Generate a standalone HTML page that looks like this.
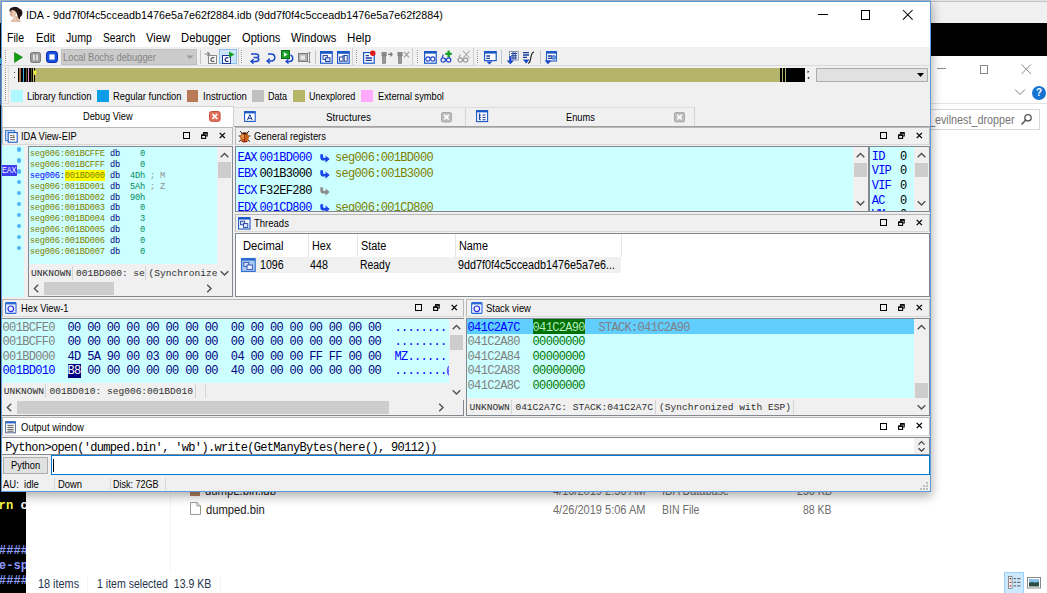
<!DOCTYPE html>
<html><head><meta charset="utf-8"><title>IDA</title>
<style>
html,body{margin:0;padding:0;}
body{width:1047px;height:593px;overflow:hidden;position:relative;background:#fff;font-family:"Liberation Sans",sans-serif;font-size:11px;color:#000;}
div,span,svg{position:absolute;box-sizing:border-box;}
.t{white-space:pre;line-height:1;font-family:"Liberation Sans",sans-serif;}
.m{font-family:"Liberation Mono",monospace;white-space:pre;}
.m i{font-style:normal;}
</style></head><body>
<!-- background: explorer + terminal -->
<div style="left:930px;top:0px;width:117px;height:23px;background:#f0f0f0;"></div>
<div style="left:930px;top:0px;width:117px;height:1px;background:#e4e4e4;"></div>
<div style="left:930px;top:1px;width:117px;height:1px;background:#c4c4c4;"></div>
<div style="left:930px;top:23px;width:117px;height:33px;background:#000;"></div>
<div style="left:937px;top:68px;width:9px;height:1px;background:#8a8a8a;"></div>
<div style="left:979.5px;top:65px;width:8.6px;height:8.6px;border:1px solid #8a8a8a;"></div>
<svg style="left:1021px;top:64px" width="11" height="11" viewBox="0 0 11 11"><path d="M0.5 0.5 L10 10 M10 0.5 L0.5 10" stroke="#8a8a8a" stroke-width="1" fill="none"/></svg>
<svg style="left:1014px;top:88px" width="12" height="8" viewBox="0 0 12 8"><path d="M1 1.5 L6 6.5 L11 1.5" stroke="#7a7a7a" stroke-width="1" fill="none"/></svg>
<div style="left:1032px;top:86px;width:14px;height:14px;border-radius:7px;background:#1673d2;"></div>
<span class="t" style="left:1036.00px;top:87.40px;font-size:11px;color:#fff;font-weight:bold;transform:scaleX(0.9000);transform-origin:0 0;">?</span>
<div style="left:930px;top:103px;width:117px;height:1px;background:#e5e5e5;"></div>
<div style="left:925px;top:109px;width:115px;height:21px;background:#fff;border:1px solid #d9d9d9;"></div>
<span class="t" style="left:929.20px;top:113.90px;font-size:12px;color:#767676;transform:scaleX(0.8963);transform-origin:0 0;">_evilnest_dropper</span>
<svg style="left:1020px;top:113px" width="13" height="13" viewBox="0 0 13 13"><circle cx="8" cy="4.8" r="3.2" stroke="#555" stroke-width="1.3" fill="none"/><path d="M5.6 7.2 L1.5 11.5" stroke="#555" stroke-width="1.6"/></svg>
<div style="left:170px;top:492px;width:1px;height:80px;background:#f4f4f4;"></div>
<span class="t" style="left:205.10px;top:485.20px;font-size:12px;color:#222;transform:scaleX(0.9406);transform-origin:0 0;">dumpL.bin.idb</span>
<div style="left:190px;top:486px;width:10px;height:10px;background:#b08060;"></div>
<span class="t" style="left:552.60px;top:485.20px;font-size:12px;color:#6d6d6d;transform:scaleX(0.9172);transform-origin:0 0;">4/16/2019 2:56 AM</span>
<span class="t" style="left:662.10px;top:485.20px;font-size:12px;color:#6d6d6d;transform:scaleX(0.9035);transform-origin:0 0;">IDA Database</span>
<span class="t" style="left:796.60px;top:485.20px;font-size:12px;color:#6d6d6d;transform:scaleX(0.8866);transform-origin:0 0;">256 KB</span>
<svg style="left:190px;top:502px" width="11" height="13" viewBox="0 0 11 13"><path d="M0.5 0.5 H7 L10.5 4 V12.5 H0.5 Z" fill="#fff" stroke="#9a9a9a" stroke-width="1"/><path d="M7 0.5 V4 H10.5" fill="none" stroke="#9a9a9a" stroke-width="1"/></svg>
<span class="t" style="left:206.00px;top:503.90px;font-size:12px;color:#1a1a1a;transform:scaleX(0.9361);transform-origin:0 0;">dumped.bin</span>
<span class="t" style="left:552.60px;top:503.90px;font-size:12px;color:#6d6d6d;transform:scaleX(0.9172);transform-origin:0 0;">4/26/2019 5:06 AM</span>
<span class="t" style="left:662.10px;top:503.90px;font-size:12px;color:#6d6d6d;transform:scaleX(0.8764);transform-origin:0 0;">BIN File</span>
<span class="t" style="left:803.40px;top:503.90px;font-size:12px;color:#6d6d6d;transform:scaleX(0.8688);transform-origin:0 0;">88 KB</span>
<span class="t" style="left:37.60px;top:578.20px;font-size:12px;color:#26344e;transform:scaleX(0.9063);transform-origin:0 0;">18 items</span>
<span class="t" style="left:97.10px;top:578.20px;font-size:12px;color:#26344e;transform:scaleX(0.8796);transform-origin:0 0;">1 item selected  13.9 KB</span>
<div style="left:87px;top:577px;width:1px;height:14px;background:#f4f4f4;"></div>
<div style="left:220px;top:577px;width:1px;height:14px;background:#f4f4f4;"></div>
<div style="left:1004px;top:572px;width:20px;height:22px;background:#cce8ff;border:1px solid #99d1ff;"></div>
<svg style="left:1008px;top:576px" width="13" height="13" viewBox="0 0 13 13"><rect x="0.5" y="0.5" width="3.5" height="12" fill="#fff" stroke="#777" stroke-width="0.8"/><rect x="1.6" y="2" width="1.4" height="1.4" fill="#333"/><rect x="1.6" y="5.6" width="1.4" height="1.4" fill="#c33"/><rect x="1.6" y="9.2" width="1.4" height="1.4" fill="#c33"/><path d="M5.5 2.7 H8 M9 2.7 H12.5 M5.5 6.3 H8 M9 6.3 H12.5 M5.5 9.9 H8 M9 9.9 H12.5" stroke="#555" stroke-width="1"/></svg>
<svg style="left:1027px;top:577px" width="14" height="12" viewBox="0 0 14 12"><rect x="0.5" y="0.5" width="13" height="10.5" fill="#fff" stroke="#8a8a8a" stroke-width="1"/><rect x="2" y="2" width="10" height="4" fill="#8cc4ec"/><rect x="2" y="5.6" width="10" height="3.9" fill="#2c4c44"/><path d="M2 6 L5 4.4 L8 5.8 L12 4.6 V6 Z" fill="#3a6a8a"/></svg>
<div style="left:0px;top:0px;width:1.5px;height:23px;background:#b2bcc6;"></div>
<div style="left:0px;top:0px;width:931px;height:1px;background:#b4c0cc;"></div>
<div style="left:0px;top:23px;width:1.5px;height:570px;background:#0c0c0c;"></div>
<div style="left:0px;top:58px;width:1.3px;height:6px;background:#30c8d8;"></div>
<div style="left:0px;top:65px;width:1.3px;height:40px;background:#5a86b8;"></div>
<div style="left:0;top:492px;width:25.6px;height:101px;background:#000;overflow:hidden;">
<span class="m" style="left:-1.4px;top:7.2px;font-size:12.2px;line-height:15.35px;font-weight:bold;color:#f6f644;">rn <i style="color:#fff">c</i></span>
<span class="m" style="left:-1.2px;top:51.5px;font-size:12.2px;line-height:15.35px;font-weight:bold;color:#8c9cff;">####
e-sp
####</span>
</div>
<!-- IDA window -->
<div style="left:1px;top:1px;width:930px;height:491px;background:#f0f0f0;border:1px solid #5f9ad8;box-shadow:0 3px 10px 1px rgba(0,0,0,0.32);"></div>
<div style="left:2px;top:2px;width:928px;height:45px;background:#fff;"></div>
<svg style="left:8px;top:6px" width="15" height="17" viewBox="0 0 15 17"><path d="M2.6 15.6 Q5.4 13.6 5.8 10.4 L9.6 9.6 Q10.2 13.4 12.8 15.2 L12.6 16 L2.4 16 Z" fill="#dcbca6"/><ellipse cx="5" cy="6.6" rx="3.3" ry="4.4" fill="#e6c6ae"/><path d="M1.4 5.2 Q1.2 1.2 5.8 0.9 Q9.6 0.6 11.6 2.8 Q14.8 3.8 14.4 7.6 Q14 10.8 11.8 11.2 Q12.8 12.8 11.6 13.4 Q9.8 11.8 9.4 9.2 Q8.8 6.2 6.6 4.6 Q4.2 3.4 2.4 5 Z" fill="#231513"/><path d="M2 6 Q3 5.4 4.2 5.9" stroke="#3a2018" stroke-width="0.6" fill="none"/><ellipse cx="3.2" cy="8.8" rx="0.9" ry="0.55" fill="#c8584c"/><path d="M6.6 11.4 Q7.6 12.6 7.2 14.6" stroke="#f4e6da" stroke-width="0.9" fill="none"/></svg>
<span class="t" style="left:26.30px;top:9.25px;font-size:11.7px;color:#000;transform:scaleX(0.9228);transform-origin:0 0;">IDA - 9dd7f0f4c5cceadb1476e5a7e62f2884.idb (9dd7f0f4c5cceadb1476e5a7e62f2884)</span>
<div style="left:818px;top:14px;width:10px;height:1px;background:#000;"></div>
<div style="left:860.5px;top:10px;width:9.5px;height:9.5px;border:1px solid #000;"></div>
<svg style="left:902px;top:9px" width="12" height="12" viewBox="0 0 12 12"><path d="M1 1 L10.6 10.6 M10.6 1 L1 10.6" stroke="#000" stroke-width="1.05" fill="none"/></svg>
<span class="t" style="left:6.90px;top:32.30px;font-size:12px;color:#000;transform:scaleX(0.8792);transform-origin:0 0;">File</span>
<span class="t" style="left:35.60px;top:32.30px;font-size:12px;color:#000;transform:scaleX(0.9285);transform-origin:0 0;">Edit</span>
<span class="t" style="left:65.60px;top:32.30px;font-size:12px;color:#000;transform:scaleX(0.8827);transform-origin:0 0;">Jump</span>
<span class="t" style="left:103.20px;top:32.30px;font-size:12px;color:#000;transform:scaleX(0.8496);transform-origin:0 0;">Search</span>
<span class="t" style="left:146.30px;top:32.30px;font-size:12px;color:#000;transform:scaleX(0.9383);transform-origin:0 0;">View</span>
<span class="t" style="left:181.40px;top:32.30px;font-size:12px;color:#000;transform:scaleX(0.9393);transform-origin:0 0;">Debugger</span>
<span class="t" style="left:242.10px;top:32.30px;font-size:12px;color:#000;transform:scaleX(0.9286);transform-origin:0 0;">Options</span>
<span class="t" style="left:291.10px;top:32.30px;font-size:12px;color:#000;transform:scaleX(0.9326);transform-origin:0 0;">Windows</span>
<span class="t" style="left:346.60px;top:32.30px;font-size:12px;color:#000;transform:scaleX(0.9684);transform-origin:0 0;">Help</span>
<!-- toolbar -->
<div style="left:2px;top:65px;width:928px;height:1px;background:#dadada;"></div>
<div style="left:5px;top:50px;width:1px;height:14px;background:repeating-linear-gradient(to bottom,#9a9a9a 0 1px,transparent 1px 2px);"></div>
<div style="left:6px;top:51px;width:1px;height:14px;background:repeating-linear-gradient(to bottom,#fff 0 1px,transparent 1px 2px);"></div>
<svg style="left:14px;top:52px" width="9" height="11" viewBox="0 0 9 11"><path d="M0.4 0.4 L8.6 5.3 L0.4 10.4 Z" fill="#12a012" stroke="#0c7a0c" stroke-width="0.6"/></svg>
<svg style="left:30px;top:52px" width="11" height="11" viewBox="0 0 11 11"><rect x="0.5" y="0.5" width="10" height="10" rx="1.8" fill="#9a9a9a" stroke="#7a7a7a"/><rect x="3.2" y="2.6" width="1.5" height="5.8" fill="#f4f4f4"/><rect x="6.3" y="2.6" width="1.5" height="5.8" fill="#f4f4f4"/></svg>
<svg style="left:46px;top:51px" width="12" height="12" viewBox="0 0 12 12"><rect x="0.5" y="0.5" width="11" height="11" rx="2.6" fill="#1a4fe0" stroke="#0a2aa8"/><rect x="3.4" y="3.4" width="5.2" height="5.2" fill="#fff"/></svg>
<div style="left:61px;top:49px;width:136px;height:16px;background:#cbcbcb;border:1px solid #c0c0c0;"></div>
<span class="t" style="left:63.40px;top:51.90px;font-size:11px;color:#848484;transform:scaleX(0.8487);transform-origin:0 0;">Local Bochs debugger</span>
<svg style="left:186px;top:55px" width="8" height="5" viewBox="0 0 8 5"><path d="M0.5 0.5 L4 4 L7.5 0.5 Z" fill="#9a9a9a"/></svg>
<div style="left:200px;top:50px;width:1px;height:14px;background:#c4c4c4;"></div>
<svg style="left:204px;top:51px" width="13" height="13" viewBox="0 0 13 13"><rect x="4.5" y="4.5" width="8" height="8" fill="#f6f6f6" stroke="#8a8a8a"/><path d="M10.3 7 Q8.5 6 7.3 7.3 Q6.3 8.8 7.5 10 Q8.8 11 10.3 10" stroke="#555" stroke-width="1.1" fill="none"/><path d="M0.5 3 H5 M3.4 1 L5.6 3 L3.4 5" stroke="#8a8a8a" stroke-width="1.2" fill="none"/></svg>
<div style="left:219px;top:49px;width:18px;height:15px;background:#cce4f7;border:1px solid #8cc0ea;"></div>
<svg style="left:222px;top:51px" width="13" height="13" viewBox="0 0 13 13"><rect x="0.5" y="4.5" width="8" height="8" fill="#fff" stroke="#1c3c9c"/><path d="M6.5 7 Q4.7 6 3.5 7.3 Q2.5 8.8 3.7 10 Q5 11 6.5 10" stroke="#1c2c7c" stroke-width="1.2" fill="none"/><path d="M7 0.5 L12.5 3.6 L7 6.8 Z" fill="#14a024"/></svg>
<div style="left:238px;top:48px;width:1px;height:17px;background:#d0d0d0;"></div>
<div style="left:241px;top:50px;width:1px;height:14px;background:repeating-linear-gradient(to bottom,#9a9a9a 0 1px,transparent 1px 2px);"></div>
<div style="left:242px;top:51px;width:1px;height:14px;background:repeating-linear-gradient(to bottom,#fff 0 1px,transparent 1px 2px);"></div>
<svg style="left:250px;top:51px" width="10" height="13" viewBox="0 0 10 13"><path d="M1 3 H6 Q8.6 3 8.6 5 Q8.6 6.6 6 6.6 H3.5 M6 6.6 Q8.8 6.6 8.8 8.6 Q8.8 10.4 6 10.4 H2" stroke="#1a48c8" stroke-width="1.5" fill="none"/><path d="M3.6 8.2 L1 10.4 L3.6 12.6" stroke="#1a48c8" stroke-width="1.4" fill="none"/></svg>
<svg style="left:266px;top:51px" width="10" height="13" viewBox="0 0 10 13"><path d="M2 3 H5 Q8.8 3 8.8 6.6 Q8.8 10 5 10 H2" stroke="#1a48c8" stroke-width="1.5" fill="none"/><path d="M3.8 7.6 L1 10 L3.8 12.4" stroke="#1a48c8" stroke-width="1.4" fill="none"/></svg>
<svg style="left:281px;top:50px" width="13" height="14" viewBox="0 0 13 14"><rect x="0.5" y="0.5" width="8" height="8" fill="#18a028" stroke="#0c6c18"/><path d="M2.8 2.3 L6.6 4.5 L2.8 6.7 Z" fill="#e8ffe8"/><path d="M9.5 5 Q12.4 6 11.6 9.4 Q10.6 12 6 11.4" stroke="#1a48c8" stroke-width="1.5" fill="none"/><path d="M7.4 9.2 L5 11.4 L7.6 13.4" stroke="#1a48c8" stroke-width="1.3" fill="none"/></svg>
<svg style="left:298px;top:52px" width="13" height="11" viewBox="0 0 13 11"><rect x="0.5" y="1.5" width="9" height="8" fill="#b0b0b0" stroke="#7c7c7c"/><rect x="2.5" y="3.5" width="4.5" height="4" fill="#e8e8e8"/><path d="M11.5 0.5 V10.5 M10 0.8 H12.6 M10 10.2 H12.6" stroke="#8a8a8a" stroke-width="1"/></svg>
<div style="left:315px;top:50px;width:1px;height:14px;background:#c4c4c4;"></div>
<svg style="left:320px;top:51px" width="13" height="13" viewBox="0 0 13 13"><rect x="0.6" y="0.6" width="11.6" height="11.6" fill="#fff" stroke="#1a58c8" stroke-width="1.2"/><rect x="0.6" y="0.6" width="11.6" height="2.2" fill="#1a58c8"/><rect x="3" y="4.6" width="4.4" height="3.8" fill="none" stroke="#1a3c9c"/><rect x="5.6" y="6.8" width="4.4" height="3.6" fill="#dde8ff" stroke="#1a3c9c"/></svg>
<svg style="left:337px;top:51px" width="13" height="13" viewBox="0 0 13 13"><rect x="0.6" y="0.6" width="11.6" height="11.6" fill="#fff" stroke="#1a58c8" stroke-width="1.2"/><rect x="0.6" y="0.6" width="11.6" height="2.2" fill="#1a58c8"/><rect x="2.6" y="6" width="3.4" height="4.2" fill="none" stroke="#1a3c9c"/><rect x="7.2" y="4.4" width="3" height="5.8" fill="none" stroke="#1a3c9c"/><path d="M5 5 H7.4" stroke="#1a3c9c"/></svg>
<div style="left:352px;top:48px;width:1px;height:17px;background:#d0d0d0;"></div>
<div style="left:356px;top:50px;width:1px;height:14px;background:repeating-linear-gradient(to bottom,#9a9a9a 0 1px,transparent 1px 2px);"></div>
<div style="left:357px;top:51px;width:1px;height:14px;background:repeating-linear-gradient(to bottom,#fff 0 1px,transparent 1px 2px);"></div>
<svg style="left:363px;top:50px" width="13" height="14" viewBox="0 0 13 14"><rect x="0.6" y="2.6" width="10.6" height="10.6" fill="#fff" stroke="#1a58c8" stroke-width="1.2"/><path d="M2.6 5.6 H6 M2.6 8 H9 M2.6 10.4 H9" stroke="#1a3c9c" stroke-width="1.3"/><circle cx="9.8" cy="3.2" r="2.7" fill="#e01818"/></svg>
<svg style="left:380px;top:51px" width="13" height="13" viewBox="0 0 13 13"><rect x="1.5" y="1" width="5.2" height="4" fill="#8a8a8a"/><rect x="2.6" y="5" width="3" height="7.4" fill="#9a9a9a" stroke="#6e6e6e" stroke-width="0.6"/><path d="M8 3.4 H12 M10.4 1.4 L12.2 3.4 L10.4 5.4" stroke="#7a7a7a" stroke-width="1.2" fill="none"/></svg>
<svg style="left:396px;top:51px" width="14" height="13" viewBox="0 0 14 13"><rect x="1.5" y="1" width="5.2" height="4" fill="#8a8a8a"/><rect x="2.6" y="5" width="3" height="7.4" fill="#9a9a9a" stroke="#6e6e6e" stroke-width="0.6"/><path d="M8 0.8 L13 6.4 M13 0.8 L8 6.4" stroke="#9a9a9a" stroke-width="1.1" fill="none"/></svg>
<div style="left:412px;top:48px;width:1px;height:17px;background:#d0d0d0;"></div>
<div style="left:417px;top:50px;width:1px;height:14px;background:repeating-linear-gradient(to bottom,#9a9a9a 0 1px,transparent 1px 2px);"></div>
<div style="left:418px;top:51px;width:1px;height:14px;background:repeating-linear-gradient(to bottom,#fff 0 1px,transparent 1px 2px);"></div>
<svg style="left:424px;top:51px" width="13" height="13" viewBox="0 0 13 13"><rect x="0.6" y="0.6" width="11.6" height="11.6" fill="#fff" stroke="#1a58c8" stroke-width="1.2"/><rect x="0.6" y="0.6" width="11.6" height="2" fill="#1a58c8"/><circle cx="4" cy="8" r="2.1" fill="none" stroke="#1a48c8" stroke-width="1.1"/><circle cx="8.8" cy="8" r="2.1" fill="none" stroke="#1a48c8" stroke-width="1.1"/></svg>
<svg style="left:440px;top:50px" width="13" height="14" viewBox="0 0 13 14"><circle cx="3.2" cy="10" r="2.2" fill="none" stroke="#1a48c8" stroke-width="1.2"/><circle cx="8.6" cy="10" r="2.2" fill="none" stroke="#1a48c8" stroke-width="1.2"/><path d="M2 7.6 L3.4 4.6 M9.6 7.6 L8.6 6" stroke="#1a48c8" stroke-width="1.1"/><path d="M8.6 0.6 V7 M5.4 3.8 H11.8" stroke="#12a022" stroke-width="2.2"/></svg>
<svg style="left:457px;top:50px" width="14" height="14" viewBox="0 0 14 14"><circle cx="3.2" cy="10" r="2.2" fill="none" stroke="#9a9a9a" stroke-width="1.2"/><circle cx="8.6" cy="10" r="2.2" fill="none" stroke="#9a9a9a" stroke-width="1.2"/><path d="M2 7.6 L3.4 4.6" stroke="#9a9a9a" stroke-width="1.1"/><path d="M6 0.8 L12.6 8 M12.6 0.8 L6 8" stroke="#a8a8a8" stroke-width="1.1"/></svg>
<div style="left:473px;top:48px;width:1px;height:17px;background:#d0d0d0;"></div>
<div style="left:477px;top:50px;width:1px;height:14px;background:repeating-linear-gradient(to bottom,#9a9a9a 0 1px,transparent 1px 2px);"></div>
<div style="left:478px;top:51px;width:1px;height:14px;background:repeating-linear-gradient(to bottom,#fff 0 1px,transparent 1px 2px);"></div>
<svg style="left:484px;top:51px" width="13" height="14" viewBox="0 0 13 14"><rect x="0.6" y="0.6" width="11.6" height="9" fill="#fff" stroke="#1a58c8" stroke-width="1.2"/><rect x="0.6" y="0.6" width="11.6" height="2" fill="#1a58c8"/><path d="M2.4 5 H6 M2.4 7.4 H6" stroke="#1a3c9c" stroke-width="1.3"/><path d="M2.4 10.6 H8.4 L5.4 13.4 Z" fill="#1a48c8"/></svg>
<div style="left:501px;top:50px;width:1px;height:14px;background:#c4c4c4;"></div>
<svg style="left:506px;top:51px" width="13" height="14" viewBox="0 0 13 14"><rect x="3.6" y="0.6" width="8.6" height="8.4" fill="#fff" stroke="#6a7a9a" stroke-width="0.8"/><path d="M5 2.6 H11 M5 4.8 H11 M5 7 H11 M7 1 V8.6 M9.2 1 V8.6" stroke="#1a3c9c" stroke-width="1"/><path d="M0.6 9.4 H8 L4.3 13.2 Z" fill="#1a48c8"/><path d="M4.3 5 V10" stroke="#1a48c8" stroke-width="2"/></svg>
<svg style="left:522px;top:51px" width="13" height="14" viewBox="0 0 13 14"><path d="M1 1.6 H7 M1 4 H7 M1 6.4 H5" stroke="#1a3c9c" stroke-width="1.4"/><path d="M0.8 8.6 H7.6 L4.2 12.6 Z" fill="#1a48c8"/><path d="M12 0.8 Q9.4 2 8.8 7 Q8.4 11 6.4 12.6" stroke="#222" stroke-width="1.2" fill="none"/></svg>
<div style="left:540px;top:50px;width:1px;height:14px;background:#c4c4c4;"></div>
<svg style="left:544px;top:51px" width="13" height="14" viewBox="0 0 13 14"><rect x="2.6" y="0.6" width="9.8" height="9.4" fill="#fff" stroke="#1a58c8" stroke-width="1.1"/><rect x="2.6" y="0.6" width="9.8" height="2" fill="#1a58c8"/><path d="M4 5 H8 M4 7.4 H8" stroke="#1a3c9c" stroke-width="1.3"/><circle cx="9.6" cy="6.4" r="2" fill="#6aa0e8" stroke="#1a3c9c" stroke-width="0.6"/><path d="M0.6 9.6 H7.4 L4 13.2 Z" fill="#1a48c8"/></svg>
<!-- nav band -->
<div style="left:5px;top:68px;width:1px;height:33px;background:repeating-linear-gradient(to bottom,#9a9a9a 0 1px,transparent 1px 2px);"></div>
<div style="left:6px;top:69px;width:1px;height:33px;background:repeating-linear-gradient(to bottom,#fff 0 1px,transparent 1px 2px);"></div>
<div style="left:8px;top:66px;width:1px;height:37px;background:#dedede;"></div>
<div style="left:2px;top:102.5px;width:7px;height:1px;background:#dedede;"></div>
<div style="left:14px;top:72px;width:1px;height:1px;background:#444;"></div>
<div style="left:14px;top:77px;width:1px;height:1px;background:#444;"></div>
<div style="left:18px;top:68px;width:762px;height:14px;background:#b4b46a;"></div>
<div style="left:18px;top:68px;width:17.4px;height:14px;background:#000;"></div>
<div style="left:19.3px;top:68px;width:1.4px;height:14px;background:#a8704c;"></div>
<div style="left:23px;top:68px;width:1.4px;height:14px;background:#40a8e0;"></div>
<div style="left:26.4px;top:68px;width:0.7px;height:14px;background:#5a5a30;"></div>
<div style="left:28.3px;top:68px;width:0.9px;height:14px;background:#e890d8;"></div>
<div style="left:30.7px;top:68px;width:0.7px;height:14px;background:#5a5a30;"></div>
<div style="left:33px;top:68px;width:0.8px;height:14px;background:#c8c870;"></div>
<svg style="left:33px;top:70px" width="4" height="5" viewBox="0 0 4 5"><path d="M2 0 L4 2.4 H2.8 V5 H1.2 V2.4 H0 Z" fill="#ffff30"/></svg>
<div style="left:780px;top:68px;width:25px;height:14px;background:#000;"></div>
<div style="left:782.2px;top:68px;width:0.9px;height:14px;background:#b4b46a;"></div>
<div style="left:785.1px;top:68px;width:0.9px;height:14px;background:#b4b46a;"></div>
<svg style="left:806px;top:70px" width="5" height="10" viewBox="0 0 5 10"><path d="M1.5 0.6 L3.4 1.8 L1.5 3" fill="#222"/><path d="M3.2 6.6 L1.4 8 L3.2 9.2" fill="#222"/></svg>
<div style="left:816px;top:68px;width:111.6px;height:14px;background:#e1e1e1;border:1px solid #adadad;"></div>
<svg style="left:917px;top:73px" width="7" height="4" viewBox="0 0 7 4"><path d="M0 0 H7 L3.5 4 Z" fill="#000"/></svg>
<!-- legend -->
<div style="left:11px;top:90px;width:11.5px;height:12px;background:#b0f8ff;"></div>
<span class="t" style="left:27.10px;top:90.75px;font-size:10.5px;color:#000;transform:scaleX(0.8972);transform-origin:0 0;">Library function</span>
<div style="left:97px;top:90px;width:11.5px;height:12px;background:#0a9ee6;"></div>
<span class="t" style="left:112.80px;top:90.75px;font-size:10.5px;color:#000;transform:scaleX(0.8972);transform-origin:0 0;">Regular function</span>
<div style="left:186.6px;top:90px;width:11.5px;height:12px;background:#b97a57;"></div>
<span class="t" style="left:202.60px;top:90.75px;font-size:10.5px;color:#000;transform:scaleX(0.9063);transform-origin:0 0;">Instruction</span>
<div style="left:252px;top:90px;width:11.5px;height:12px;background:#c0c0c0;"></div>
<span class="t" style="left:268.40px;top:90.75px;font-size:10.5px;color:#000;transform:scaleX(0.8612);transform-origin:0 0;">Data</span>
<div style="left:293px;top:90px;width:11.5px;height:12px;background:#b5b567;"></div>
<span class="t" style="left:309.30px;top:90.75px;font-size:10.5px;color:#000;transform:scaleX(0.8604);transform-origin:0 0;">Unexplored</span>
<div style="left:361px;top:90px;width:11.5px;height:12px;background:#ffaaff;"></div>
<span class="t" style="left:377.60px;top:90.75px;font-size:10.5px;color:#000;transform:scaleX(0.8823);transform-origin:0 0;">External symbol</span>
<!-- tabs -->
<div style="left:2px;top:126px;width:928px;height:1px;background:#a0a0a0;"></div>
<div style="left:2px;top:106px;width:232px;height:21px;background:#fff;border:1px solid #d0d0d0;border-bottom:none;"></div>
<span class="t" style="left:83.40px;top:111.45px;font-size:10.5px;color:#000;transform:scaleX(0.8791);transform-origin:0 0;">Debug View</span>
<svg style="left:209px;top:111px" width="12" height="11" viewBox="0 0 12 11"><rect x="0.5" y="0.5" width="10.6" height="9.8" rx="2" fill="#e2705c" stroke="#c4523e"/><path d="M3.4 3 L8.2 7.8 M8.2 3 L3.4 7.8" stroke="#fff" stroke-width="1.7"/></svg>
<div style="left:234px;top:107px;width:232px;height:19px;background:#f0f0f0;border-top:1px solid #dcdcdc;border-right:1px solid #d4d4d4;"></div>
<svg style="left:244px;top:111px" width="12" height="11" viewBox="0 0 12 11"><rect x="0.6" y="0.6" width="10.6" height="9.8" fill="#fff" stroke="#1a58c8" stroke-width="1.1"/><rect x="0.6" y="0.6" width="10.6" height="1.8" fill="#1a58c8"/><path d="M3.4 9.2 L5.8 3.6 L8.2 9.2 M4.2 7.4 H7.4" stroke="#1a3c9c" stroke-width="1" fill="none"/></svg>
<span class="t" style="left:325.60px;top:112.05px;font-size:10.5px;color:#000;transform:scaleX(0.9384);transform-origin:0 0;">Structures</span>
<svg style="left:441px;top:112px" width="11" height="11" viewBox="0 0 11 11"><rect x="0.5" y="0.5" width="10" height="9.4" rx="1.4" fill="#bdbdbd" stroke="#a8a8a8"/><path d="M3.2 2.9 L7.8 7.5 M7.8 2.9 L3.2 7.5" stroke="#fff" stroke-width="1.6"/></svg>
<div style="left:466px;top:107px;width:229px;height:19px;background:#f0f0f0;border-top:1px solid #dcdcdc;border-right:1px solid #d4d4d4;"></div>
<svg style="left:476px;top:110px" width="13" height="13" viewBox="0 0 13 13"><rect x="0.6" y="0.6" width="11" height="11" fill="#fff" stroke="#1a58c8" stroke-width="1.1"/><rect x="0.6" y="0.6" width="11" height="1.8" fill="#1a58c8"/><path d="M3.4 3.4 V10 M3.4 5 H5 M3.4 7.4 H5 M3.4 9.8 H5 M6.4 5 H9.6 M6.4 7.4 H9.6 M6.4 9.8 H9.6" stroke="#1a3c9c" stroke-width="1" fill="none"/></svg>
<span class="t" style="left:565.60px;top:112.05px;font-size:10.5px;color:#000;transform:scaleX(0.8844);transform-origin:0 0;">Enums</span>
<svg style="left:673.5px;top:112px" width="11" height="11" viewBox="0 0 11 11"><rect x="0.5" y="0.5" width="10" height="9.4" rx="1.4" fill="#bdbdbd" stroke="#a8a8a8"/><path d="M3.2 2.9 L7.8 7.5 M7.8 2.9 L3.2 7.5" stroke="#fff" stroke-width="1.6"/></svg>
<!-- panels -->
<div style="left:2px;top:127px;width:231px;height:18px;background:#f0f0f0;border:1px solid #b8b8b8;border-bottom-color:#d8d8d8;"></div>
<span class="t" style="left:20.90px;top:131.05px;font-size:10.5px;color:#000;transform:scaleX(0.8865);transform-origin:0 0;">IDA View-EIP</span>
<div style="left:183px;top:132.0px;width:7px;height:7px;border:1px solid #000;border-top-width:1.6px;"></div>
<svg style="left:201px;top:132.0px" width="7" height="7" viewBox="0 0 7 7"><path d="M2.5 2.5 V0.8 H6.2 V4 H4.6" stroke="#000" stroke-width="1.1" fill="none"/><path d="M2.3 0.9 H6.4" stroke="#000" stroke-width="1.6"/><rect x="0.6" y="3.2" width="4" height="3.2" fill="none" stroke="#000" stroke-width="1.1"/><path d="M0.4 3.1 H4.8" stroke="#000" stroke-width="1.5"/></svg>
<svg style="left:219px;top:131.8px" width="7" height="7" viewBox="0 0 7 7"><path d="M0.7 0.9 L5.9 6.1 M5.9 0.9 L0.7 6.1" stroke="#000" stroke-width="1.3" fill="none"/></svg>
<svg style="left:5px;top:130.4px" width="13" height="13" viewBox="0 0 13 13"><rect x="0.6" y="0.6" width="9" height="10" fill="#cfe3fb" stroke="#3a78d0" stroke-width="1"/><rect x="3.2" y="2.6" width="9" height="9.6" fill="#fff" stroke="#1a58c8" stroke-width="1.1"/><path d="M5 5.4 H7.6 M5 7.4 H10 M5 9.6 H10 M8.8 4.6 V7" stroke="#555" stroke-width="0.9"/></svg>
<div style="left:2px;top:146px;width:22px;height:151px;background:#ccffff;"></div>
<div style="left:28px;top:146px;width:205px;height:151px;background:#f0f0f0;border:1px solid #828790;"></div>
<div style="left:29px;top:147px;width:188px;height:117px;background:#ccffff;"></div>
<div style="left:17px;top:147.4px;width:4.4px;height:4.4px;border-radius:2.2px;background:#50b4f4;"></div>
<div style="left:17px;top:158.3px;width:4.4px;height:4.4px;border-radius:2.2px;background:#50b4f4;"></div>
<div style="left:17px;top:169.2px;width:4.4px;height:4.4px;border-radius:2.2px;background:#50b4f4;"></div>
<div style="left:17px;top:180.1px;width:4.4px;height:4.4px;border-radius:2.2px;background:#50b4f4;"></div>
<div style="left:17px;top:191.0px;width:4.4px;height:4.4px;border-radius:2.2px;background:#50b4f4;"></div>
<div style="left:17px;top:201.9px;width:4.4px;height:4.4px;border-radius:2.2px;background:#50b4f4;"></div>
<div style="left:17px;top:212.8px;width:4.4px;height:4.4px;border-radius:2.2px;background:#50b4f4;"></div>
<div style="left:17px;top:223.7px;width:4.4px;height:4.4px;border-radius:2.2px;background:#50b4f4;"></div>
<div style="left:17px;top:234.6px;width:4.4px;height:4.4px;border-radius:2.2px;background:#50b4f4;"></div>
<div style="left:17px;top:245.5px;width:4.4px;height:4.4px;border-radius:2.2px;background:#50b4f4;"></div>
<div style="left:1.6px;top:165px;width:15.6px;height:11px;background:#3c3cf0;"></div>
<span class="t" style="left:2.20px;top:165.80px;font-size:9px;color:#fff;transform:scaleX(0.7940);transform-origin:0 0;">EAX</span>
<span class="m" style="left:29.70px;top:149.90px;font-size:8.7px;line-height:8.7px;letter-spacing:-0.201px;"><i style="color:#808000;">seg006:</i><i style="color:#808000;">001BCFFE</i><i style="color:#000080;"> db</i><i style="color:#008a60;">    0</i></span>
<span class="m" style="left:29.70px;top:160.80px;font-size:8.7px;line-height:8.7px;letter-spacing:-0.201px;"><i style="color:#808000;">seg006:</i><i style="color:#808000;">001BCFFF</i><i style="color:#000080;"> db</i><i style="color:#008a60;">    0</i></span>
<span class="m" style="left:29.70px;top:171.70px;font-size:8.7px;line-height:8.7px;letter-spacing:-0.201px;"><i style="color:#0000ff;">seg006:</i><i style="color:#808000;background:#ffff00;padding-top:1.2px;">001BD000</i><i style="color:#000080;"> db</i><i style="color:#008a60;">  4Dh</i><i style="color:#909090;"> ; M</i></span>
<span class="m" style="left:29.70px;top:182.60px;font-size:8.7px;line-height:8.7px;letter-spacing:-0.201px;"><i style="color:#808000;">seg006:</i><i style="color:#808000;">001BD001</i><i style="color:#000080;"> db</i><i style="color:#008a60;">  5Ah</i><i style="color:#909090;"> ; Z</i></span>
<span class="m" style="left:29.70px;top:193.50px;font-size:8.7px;line-height:8.7px;letter-spacing:-0.201px;"><i style="color:#808000;">seg006:</i><i style="color:#808000;">001BD002</i><i style="color:#000080;"> db</i><i style="color:#008a60;">  90h</i></span>
<span class="m" style="left:29.70px;top:204.40px;font-size:8.7px;line-height:8.7px;letter-spacing:-0.201px;"><i style="color:#808000;">seg006:</i><i style="color:#808000;">001BD003</i><i style="color:#000080;"> db</i><i style="color:#008a60;">    0</i></span>
<span class="m" style="left:29.70px;top:215.30px;font-size:8.7px;line-height:8.7px;letter-spacing:-0.201px;"><i style="color:#808000;">seg006:</i><i style="color:#808000;">001BD004</i><i style="color:#000080;"> db</i><i style="color:#008a60;">    3</i></span>
<span class="m" style="left:29.70px;top:226.20px;font-size:8.7px;line-height:8.7px;letter-spacing:-0.201px;"><i style="color:#808000;">seg006:</i><i style="color:#808000;">001BD005</i><i style="color:#000080;"> db</i><i style="color:#008a60;">    0</i></span>
<span class="m" style="left:29.70px;top:237.10px;font-size:8.7px;line-height:8.7px;letter-spacing:-0.201px;"><i style="color:#808000;">seg006:</i><i style="color:#808000;">001BD006</i><i style="color:#000080;"> db</i><i style="color:#008a60;">    0</i></span>
<span class="m" style="left:29.70px;top:248.00px;font-size:8.7px;line-height:8.7px;letter-spacing:-0.201px;"><i style="color:#808000;">seg006:</i><i style="color:#808000;">001BD007</i><i style="color:#000080;"> db</i><i style="color:#008a60;">    0</i></span>
<span class="m" style="left:31.00px;top:268.82px;font-size:9.57px;line-height:9.57px;letter-spacing:-0.003px;color:#2e2e2e;">UNKNOWN</span>
<span class="m" style="left:76.00px;top:268.82px;font-size:9.57px;line-height:9.57px;letter-spacing:-0.003px;color:#2e2e2e;width:69px;overflow:hidden;">001BD000: se</span>
<span class="m" style="left:148.60px;top:268.82px;font-size:9.57px;line-height:9.57px;letter-spacing:-0.003px;color:#2e2e2e;width:68px;overflow:hidden;">(Synchronize</span>
<div style="left:72px;top:266px;width:1px;height:14px;background:#d4d4d4;"></div>
<div style="left:145px;top:266px;width:1px;height:14px;background:#d4d4d4;"></div>
<div style="left:217px;top:147px;width:15px;height:134px;background:#f0f0f0;"></div>
<svg style="left:220.0px;top:152px" width="9" height="7" viewBox="0 0 9 7"><path d="M0.7 5.2 L4.5 1.4 L8.3 5.2" stroke="#505050" stroke-width="1.4" fill="none"/></svg>
<svg style="left:220.0px;top:269.5px" width="9" height="7" viewBox="0 0 9 7"><path d="M0.7 1.2 L4.5 5 L8.3 1.2" stroke="#505050" stroke-width="1.4" fill="none"/></svg>
<div style="left:218px;top:162px;width:13px;height:16px;background:#cdcdcd;"></div>
<div style="left:29px;top:281px;width:188px;height:14.5px;background:#f0f0f0;"></div>
<svg style="left:33px;top:283.8px" width="7" height="9" viewBox="0 0 7 9"><path d="M5.2 0.7 L1.4 4.5 L5.2 8.3" stroke="#505050" stroke-width="1.4" fill="none"/></svg>
<svg style="left:205.5px;top:283.8px" width="7" height="9" viewBox="0 0 7 9"><path d="M1.2 0.7 L5 4.5 L1.2 8.3" stroke="#505050" stroke-width="1.4" fill="none"/></svg>
<div style="left:44px;top:282px;width:70px;height:13px;background:#cdcdcd;"></div>
<div style="left:217px;top:281px;width:15px;height:15px;background:#f0f0f0;"></div>
<div style="left:235px;top:127px;width:695px;height:18px;background:#f0f0f0;border:1px solid #b8b8b8;border-bottom-color:#d8d8d8;"></div>
<span class="t" style="left:253.90px;top:131.05px;font-size:10.5px;color:#000;transform:scaleX(0.8929);transform-origin:0 0;">General registers</span>
<div style="left:880px;top:132.0px;width:7px;height:7px;border:1px solid #000;border-top-width:1.6px;"></div>
<svg style="left:898px;top:132.0px" width="7" height="7" viewBox="0 0 7 7"><path d="M2.5 2.5 V0.8 H6.2 V4 H4.6" stroke="#000" stroke-width="1.1" fill="none"/><path d="M2.3 0.9 H6.4" stroke="#000" stroke-width="1.6"/><rect x="0.6" y="3.2" width="4" height="3.2" fill="none" stroke="#000" stroke-width="1.1"/><path d="M0.4 3.1 H4.8" stroke="#000" stroke-width="1.5"/></svg>
<svg style="left:916px;top:131.8px" width="7" height="7" viewBox="0 0 7 7"><path d="M0.7 0.9 L5.9 6.1 M5.9 0.9 L0.7 6.1" stroke="#000" stroke-width="1.3" fill="none"/></svg>
<svg style="left:238px;top:130.4px" width="13" height="13" viewBox="0 0 13 13"><path d="M2 1 L4.4 3.6 M11 1 L8.6 3.6 M0.6 6 H3 M12.4 6 H10 M1 11.6 L3.4 9.6 M12 11.6 L9.6 9.6" stroke="#222" stroke-width="1"/><ellipse cx="6.5" cy="7.2" rx="4.3" ry="4.9" fill="#c8621c"/><ellipse cx="5.2" cy="6.4" rx="1.8" ry="2.6" fill="#e8964a"/><path d="M3 3.8 Q6.5 1.2 10 3.8 Q6.5 5.4 3 3.8 Z" fill="#3a1c0c"/><path d="M6.5 4.6 V12" stroke="#8a2a08" stroke-width="0.9"/><path d="M3.6 11 Q6.5 13 9.4 11" stroke="#a01c10" stroke-width="1.2" fill="none"/></svg>
<div style="left:235px;top:146px;width:634px;height:66px;background:#f0f0f0;border:1px solid #828790;"></div>
<div style="left:236px;top:147px;width:617px;height:64px;background:#ccffff;"></div>
<div style="left:236px;top:147px;width:617px;height:64px;overflow:hidden;">
<span class="m" style="left:1.60px;top:5.00px;font-size:12px;line-height:12px;letter-spacing:-0.901px;color:#0000ff;">EAX</span>
<span class="m" style="left:23.60px;top:5.00px;font-size:12px;line-height:12px;letter-spacing:-0.671px;color:#0000ff;">001BD000</span>
<svg style="left:83.6px;top:6.5px" width="10" height="9" viewBox="0 0 10 9"><path d="M0.3 0.3 H3.1 V2.8 Q3.1 4 4.5 4 H5.5 V1.6 L9.7 5.1 L5.5 8.8 V6.6 H3.6 Q0.3 6.6 0.3 3.2 Z" fill="#1848e8"/></svg>
<span class="m" style="left:99.00px;top:5.00px;font-size:12px;line-height:12px;letter-spacing:-0.671px;color:#808000;">seg006:001BD000</span>
<span class="m" style="left:1.60px;top:21.00px;font-size:12px;line-height:12px;letter-spacing:-0.901px;color:#0000ff;">EBX</span>
<span class="m" style="left:23.60px;top:21.00px;font-size:12px;line-height:12px;letter-spacing:-0.671px;color:#000;">001B3000</span>
<svg style="left:83.6px;top:22.5px" width="10" height="9" viewBox="0 0 10 9"><path d="M0.3 0.3 H3.1 V2.8 Q3.1 4 4.5 4 H5.5 V1.6 L9.7 5.1 L5.5 8.8 V6.6 H3.6 Q0.3 6.6 0.3 3.2 Z" fill="#1848e8"/></svg>
<span class="m" style="left:99.00px;top:21.00px;font-size:12px;line-height:12px;letter-spacing:-0.671px;color:#808000;">seg006:001B3000</span>
<span class="m" style="left:1.60px;top:38.00px;font-size:12px;line-height:12px;letter-spacing:-0.901px;color:#0000ff;">ECX</span>
<span class="m" style="left:23.60px;top:38.00px;font-size:12px;line-height:12px;letter-spacing:-0.671px;color:#000;">F32EF280</span>
<svg style="left:83.6px;top:39.5px" width="10" height="9" viewBox="0 0 10 9"><path d="M0.3 0.3 H3.1 V2.8 Q3.1 4 4.5 4 H5.5 V1.6 L9.7 5.1 L5.5 8.8 V6.6 H3.6 Q0.3 6.6 0.3 3.2 Z" fill="#8c8c8c"/></svg>
<span class="m" style="left:1.60px;top:55.00px;font-size:12px;line-height:12px;letter-spacing:-0.901px;color:#0000ff;">EDX</span>
<span class="m" style="left:23.60px;top:55.00px;font-size:12px;line-height:12px;letter-spacing:-0.671px;color:#0000ff;">001CD800</span>
<svg style="left:83.6px;top:56.5px" width="10" height="9" viewBox="0 0 10 9"><path d="M0.3 0.3 H3.1 V2.8 Q3.1 4 4.5 4 H5.5 V1.6 L9.7 5.1 L5.5 8.8 V6.6 H3.6 Q0.3 6.6 0.3 3.2 Z" fill="#1848e8"/></svg>
<span class="m" style="left:99.00px;top:55.00px;font-size:12px;line-height:12px;letter-spacing:-0.671px;color:#808000;">seg006:001CD800</span>
</div>
<div style="left:853px;top:147px;width:15px;height:64px;background:#f0f0f0;"></div>
<svg style="left:856.0px;top:152px" width="9" height="7" viewBox="0 0 9 7"><path d="M0.7 5.2 L4.5 1.4 L8.3 5.2" stroke="#505050" stroke-width="1.4" fill="none"/></svg>
<svg style="left:856.0px;top:199.5px" width="9" height="7" viewBox="0 0 9 7"><path d="M0.7 1.2 L4.5 5 L8.3 1.2" stroke="#505050" stroke-width="1.4" fill="none"/></svg>
<div style="left:854px;top:162.5px;width:13px;height:14.5px;background:#cdcdcd;"></div>
<div style="left:869px;top:146px;width:61px;height:66px;background:#f0f0f0;border:1px solid #828790;"></div>
<div style="left:870px;top:147px;width:44px;height:64px;overflow:hidden;background:#ccffff;">
<span class="m" style="left:1.80px;top:4.00px;font-size:12px;line-height:12px;letter-spacing:-0.801px;color:#0000ff;">ID</span>
<span class="m" style="left:30.00px;top:4.00px;font-size:12px;line-height:12px;letter-spacing:-0.671px;color:#000;">0</span>
<span class="m" style="left:1.80px;top:18.00px;font-size:12px;line-height:12px;letter-spacing:-0.801px;color:#0000ff;">VIP</span>
<span class="m" style="left:30.00px;top:18.00px;font-size:12px;line-height:12px;letter-spacing:-0.671px;color:#000;">0</span>
<span class="m" style="left:1.80px;top:33.00px;font-size:12px;line-height:12px;letter-spacing:-0.801px;color:#0000ff;">VIF</span>
<span class="m" style="left:30.00px;top:33.00px;font-size:12px;line-height:12px;letter-spacing:-0.671px;color:#000;">0</span>
<span class="m" style="left:1.80px;top:48.00px;font-size:12px;line-height:12px;letter-spacing:-0.801px;color:#0000ff;">AC</span>
<span class="m" style="left:30.00px;top:48.00px;font-size:12px;line-height:12px;letter-spacing:-0.671px;color:#000;">0</span>
<span class="m" style="left:1.80px;top:62.00px;font-size:12px;line-height:12px;letter-spacing:-0.801px;color:#0000ff;">VM</span>
<span class="m" style="left:30.00px;top:62.00px;font-size:12px;line-height:12px;letter-spacing:-0.671px;color:#000;">0</span>
</div>
<div style="left:914px;top:147px;width:15px;height:64px;background:#f0f0f0;"></div>
<svg style="left:917.0px;top:152px" width="9" height="7" viewBox="0 0 9 7"><path d="M0.7 5.2 L4.5 1.4 L8.3 5.2" stroke="#505050" stroke-width="1.4" fill="none"/></svg>
<svg style="left:917.0px;top:199.5px" width="9" height="7" viewBox="0 0 9 7"><path d="M0.7 1.2 L4.5 5 L8.3 1.2" stroke="#505050" stroke-width="1.4" fill="none"/></svg>
<div style="left:915px;top:162.5px;width:13px;height:14.5px;background:#cdcdcd;"></div>
<div style="left:235px;top:214px;width:695px;height:18px;background:#f0f0f0;border:1px solid #b8b8b8;border-bottom-color:#d8d8d8;"></div>
<span class="t" style="left:253.90px;top:218.05px;font-size:10.5px;color:#000;transform:scaleX(0.9061);transform-origin:0 0;">Threads</span>
<div style="left:880px;top:219.0px;width:7px;height:7px;border:1px solid #000;border-top-width:1.6px;"></div>
<svg style="left:898px;top:219.0px" width="7" height="7" viewBox="0 0 7 7"><path d="M2.5 2.5 V0.8 H6.2 V4 H4.6" stroke="#000" stroke-width="1.1" fill="none"/><path d="M2.3 0.9 H6.4" stroke="#000" stroke-width="1.6"/><rect x="0.6" y="3.2" width="4" height="3.2" fill="none" stroke="#000" stroke-width="1.1"/><path d="M0.4 3.1 H4.8" stroke="#000" stroke-width="1.5"/></svg>
<svg style="left:916px;top:218.8px" width="7" height="7" viewBox="0 0 7 7"><path d="M0.7 0.9 L5.9 6.1 M5.9 0.9 L0.7 6.1" stroke="#000" stroke-width="1.3" fill="none"/></svg>
<svg style="left:238px;top:217.4px" width="13" height="13" viewBox="0 0 13 13"><rect x="0.6" y="0.6" width="11.4" height="11.4" fill="#fff" stroke="#1a58c8" stroke-width="1.1"/><rect x="0.6" y="0.6" width="11.4" height="2" fill="#1a58c8"/><rect x="2.6" y="4.2" width="4.2" height="3.6" fill="#dce8fc" stroke="#1a3c9c" stroke-width="0.9"/><rect x="5.4" y="6.6" width="4.4" height="3.8" fill="#dce8fc" stroke="#1a3c9c" stroke-width="0.9"/></svg>
<div style="left:235px;top:233px;width:695px;height:64px;background:#fff;border:1px solid #828790;"></div>
<div style="left:239.5px;top:256.5px;width:381.5px;height:16.5px;background:#f0f0f0;"></div>
<div style="left:308px;top:234px;width:1px;height:22.5px;background:#e5e5e5;"></div>
<div style="left:357px;top:234px;width:1px;height:22.5px;background:#e5e5e5;"></div>
<div style="left:455px;top:234px;width:1px;height:22.5px;background:#e5e5e5;"></div>
<div style="left:621px;top:234px;width:1px;height:22.5px;background:#e5e5e5;"></div>
<span class="t" style="left:242.60px;top:239.70px;font-size:12px;color:#000;transform:scaleX(0.9322);transform-origin:0 0;">Decimal</span>
<span class="t" style="left:312.10px;top:239.70px;font-size:12px;color:#000;transform:scaleX(0.8951);transform-origin:0 0;">Hex</span>
<span class="t" style="left:360.80px;top:239.70px;font-size:12px;color:#000;transform:scaleX(0.9066);transform-origin:0 0;">State</span>
<span class="t" style="left:459.10px;top:239.70px;font-size:12px;color:#000;transform:scaleX(0.9029);transform-origin:0 0;">Name</span>
<svg style="left:241px;top:257.5px" width="15" height="14" viewBox="0 0 15 14"><rect x="0.6" y="0.6" width="13.6" height="12.8" fill="#a9cbf2" stroke="#2a6ad0" stroke-width="1.1"/><rect x="0.6" y="0.6" width="13.6" height="2" fill="#2a6ad0"/><rect x="2.8" y="4.4" width="5" height="4" fill="#dbe9fb" stroke="#2a4cac" stroke-width="0.9"/><rect x="6" y="7" width="5.4" height="4.4" fill="#eef4ff" stroke="#2a4cac" stroke-width="0.9"/></svg>
<span class="t" style="left:260.10px;top:258.70px;font-size:12px;color:#000;transform:scaleX(0.8841);transform-origin:0 0;">1096</span>
<span class="t" style="left:310.10px;top:258.70px;font-size:12px;color:#000;transform:scaleX(0.8941);transform-origin:0 0;">448</span>
<span class="t" style="left:359.60px;top:258.70px;font-size:12px;color:#000;transform:scaleX(0.8678);transform-origin:0 0;">Ready</span>
<span class="t" style="left:457.60px;top:258.70px;font-size:12px;color:#000;transform:scaleX(0.8976);transform-origin:0 0;">9dd7f0f4c5cceadb1476e5a7e6...</span>
<!-- hex view -->
<div style="left:2px;top:299px;width:462px;height:18px;background:#f0f0f0;border:1px solid #b8b8b8;border-bottom-color:#d8d8d8;"></div>
<span class="t" style="left:20.90px;top:303.05px;font-size:10.5px;color:#000;transform:scaleX(0.8861);transform-origin:0 0;">Hex View-1</span>
<div style="left:415px;top:304.0px;width:7px;height:7px;border:1px solid #000;border-top-width:1.6px;"></div>
<svg style="left:433px;top:304.0px" width="7" height="7" viewBox="0 0 7 7"><path d="M2.5 2.5 V0.8 H6.2 V4 H4.6" stroke="#000" stroke-width="1.1" fill="none"/><path d="M2.3 0.9 H6.4" stroke="#000" stroke-width="1.6"/><rect x="0.6" y="3.2" width="4" height="3.2" fill="none" stroke="#000" stroke-width="1.1"/><path d="M0.4 3.1 H4.8" stroke="#000" stroke-width="1.5"/></svg>
<svg style="left:451px;top:303.8px" width="7" height="7" viewBox="0 0 7 7"><path d="M0.7 0.9 L5.9 6.1 M5.9 0.9 L0.7 6.1" stroke="#000" stroke-width="1.3" fill="none"/></svg>
<svg style="left:5px;top:302.4px" width="13" height="13" viewBox="0 0 13 13"><rect x="0.6" y="0.6" width="10.4" height="10.8" rx="1" fill="#eef4ff" stroke="#2a68d8" stroke-width="1.1"/><rect x="0.6" y="0.6" width="10.4" height="1.8" fill="#2a68d8"/><ellipse cx="5.8" cy="6.8" rx="2.8" ry="2.8" fill="none" stroke="#2a2ae0" stroke-width="1.2"/></svg>
<div style="left:2px;top:318px;width:462px;height:98px;background:#f0f0f0;border:1px solid #828790;border-left:none;"></div>
<div style="left:2px;top:319px;width:447px;height:63.5px;background:#ccffff;"></div>
<div style="left:2px;top:319px;width:447px;height:63.5px;overflow:hidden;">
<span class="m" style="left:0.60px;top:3.00px;font-size:12px;line-height:12px;letter-spacing:-0.671px;color:#808080;">001BCFE0</span>
<span class="m" style="left:65.60px;top:3.00px;font-size:12px;line-height:12px;letter-spacing:-0.671px;color:#000080;">00 00 00 00 00 00 00 00  00 00 00 00 00 00 00 00</span>
<span class="m" style="left:392.40px;top:3.00px;font-size:12px;line-height:12px;letter-spacing:-0.671px;color:#0000ff;">........</span>
<span class="m" style="left:0.60px;top:17.00px;font-size:12px;line-height:12px;letter-spacing:-0.671px;color:#808080;">001BCFF0</span>
<span class="m" style="left:65.60px;top:17.00px;font-size:12px;line-height:12px;letter-spacing:-0.671px;color:#000080;">00 00 00 00 00 00 00 00  00 00 00 00 00 00 00 00</span>
<span class="m" style="left:392.40px;top:17.00px;font-size:12px;line-height:12px;letter-spacing:-0.671px;color:#0000ff;">........</span>
<span class="m" style="left:0.60px;top:32.00px;font-size:12px;line-height:12px;letter-spacing:-0.671px;color:#808080;">001BD000</span>
<span class="m" style="left:65.60px;top:32.00px;font-size:12px;line-height:12px;letter-spacing:-0.671px;color:#000080;">4D 5A 90 00 03 00 00 00  04 00 00 00 FF FF 00 00</span>
<span class="m" style="left:392.40px;top:32.00px;font-size:12px;line-height:12px;letter-spacing:-0.671px;color:#0000ff;">MZ......</span>
<span class="m" style="left:0.60px;top:46.00px;font-size:12px;line-height:12px;letter-spacing:-0.671px;color:#0000ff;">001BD010</span>
<span class="m" style="left:65.60px;top:46.00px;font-size:12px;line-height:12px;letter-spacing:-0.671px;"><i style="color:#fff;background:#000080;">B8</i><i style="color:#000080;"> 00 00 00 00 00 00 00  40 00 00 00 00 00 00 00</i></span>
<span class="m" style="left:392.40px;top:46.00px;font-size:12px;line-height:12px;letter-spacing:-0.671px;color:#0000ff;">........@</span>
</div>
<span class="m" style="left:3.80px;top:386.82px;font-size:9.57px;line-height:9.57px;letter-spacing:-0.003px;color:#2e2e2e;">UNKNOWN</span>
<span class="m" style="left:49.60px;top:386.82px;font-size:9.57px;line-height:9.57px;letter-spacing:-0.003px;color:#2e2e2e;">001BD010: seg006:001BD010</span>
<div style="left:45px;top:384px;width:1px;height:14px;background:#d4d4d4;"></div>
<div style="left:195px;top:384px;width:1px;height:14px;background:#d4d4d4;"></div>
<div style="left:205px;top:384px;width:1px;height:14px;background:#d4d4d4;"></div>
<div style="left:449px;top:319px;width:14.5px;height:81px;background:#f0f0f0;"></div>
<svg style="left:451.75px;top:324px" width="9" height="7" viewBox="0 0 9 7"><path d="M0.7 5.2 L4.5 1.4 L8.3 5.2" stroke="#505050" stroke-width="1.4" fill="none"/></svg>
<svg style="left:451.75px;top:388.5px" width="9" height="7" viewBox="0 0 9 7"><path d="M0.7 1.2 L4.5 5 L8.3 1.2" stroke="#505050" stroke-width="1.4" fill="none"/></svg>
<div style="left:450px;top:335px;width:12.5px;height:15px;background:#cdcdcd;"></div>
<div style="left:2px;top:400px;width:447px;height:14.5px;background:#f0f0f0;"></div>
<svg style="left:6px;top:402.5px" width="7" height="9" viewBox="0 0 7 9"><path d="M5.2 0.7 L1.4 4.5 L5.2 8.3" stroke="#505050" stroke-width="1.4" fill="none"/></svg>
<svg style="left:438px;top:402.5px" width="7" height="9" viewBox="0 0 7 9"><path d="M1.2 0.7 L5 4.5 L1.2 8.3" stroke="#505050" stroke-width="1.4" fill="none"/></svg>
<div style="left:17px;top:400.5px;width:372px;height:13.5px;background:#cdcdcd;"></div>
<!-- stack view -->
<div style="left:466px;top:299px;width:464px;height:18px;background:#f0f0f0;border:1px solid #b8b8b8;border-bottom-color:#d8d8d8;"></div>
<span class="t" style="left:485.75px;top:303.05px;font-size:10.5px;color:#000;transform:scaleX(0.8947);transform-origin:0 0;">Stack view</span>
<div style="left:880px;top:304.0px;width:7px;height:7px;border:1px solid #000;border-top-width:1.6px;"></div>
<svg style="left:898px;top:304.0px" width="7" height="7" viewBox="0 0 7 7"><path d="M2.5 2.5 V0.8 H6.2 V4 H4.6" stroke="#000" stroke-width="1.1" fill="none"/><path d="M2.3 0.9 H6.4" stroke="#000" stroke-width="1.6"/><rect x="0.6" y="3.2" width="4" height="3.2" fill="none" stroke="#000" stroke-width="1.1"/><path d="M0.4 3.1 H4.8" stroke="#000" stroke-width="1.5"/></svg>
<svg style="left:916px;top:303.8px" width="7" height="7" viewBox="0 0 7 7"><path d="M0.7 0.9 L5.9 6.1 M5.9 0.9 L0.7 6.1" stroke="#000" stroke-width="1.3" fill="none"/></svg>
<svg style="left:470.7px;top:302.4px" width="13" height="13" viewBox="0 0 13 13"><rect x="0.6" y="0.6" width="10.4" height="10.8" rx="1" fill="#eef4ff" stroke="#2a68d8" stroke-width="1.1"/><rect x="0.6" y="0.6" width="10.4" height="1.8" fill="#2a68d8"/><ellipse cx="5.8" cy="6.8" rx="2.8" ry="2.8" fill="none" stroke="#2a2ae0" stroke-width="1.2"/></svg>
<div style="left:466px;top:318px;width:464px;height:98px;background:#f0f0f0;border:1px solid #828790;"></div>
<div style="left:467px;top:319px;width:447px;height:79px;background:#ccffff;"></div>
<div style="left:467px;top:319px;width:447px;height:14.6px;background:#60ceff;"></div>
<span class="m" style="left:467.60px;top:322.00px;font-size:12px;line-height:12px;letter-spacing:-0.671px;color:#0000ff;">041C2A7C</span>
<div style="left:532.8px;top:319px;width:52.6px;height:14.6px;background:#007000;"></div>
<span class="m" style="left:532.60px;top:322.00px;font-size:12px;line-height:12px;letter-spacing:-0.671px;color:#b4ecc0;">041C2A90</span>
<span class="m" style="left:598.40px;top:322.00px;font-size:12px;line-height:12px;letter-spacing:-0.671px;color:#808080;">STACK:041C2A90</span>
<span class="m" style="left:467.60px;top:336.00px;font-size:12px;line-height:12px;letter-spacing:-0.671px;color:#808080;">041C2A80</span>
<span class="m" style="left:532.60px;top:336.00px;font-size:12px;line-height:12px;letter-spacing:-0.671px;color:#007800;">00000000</span>
<span class="m" style="left:467.60px;top:351.00px;font-size:12px;line-height:12px;letter-spacing:-0.671px;color:#808080;">041C2A84</span>
<span class="m" style="left:532.60px;top:351.00px;font-size:12px;line-height:12px;letter-spacing:-0.671px;color:#007800;">00000000</span>
<span class="m" style="left:467.60px;top:365.00px;font-size:12px;line-height:12px;letter-spacing:-0.671px;color:#808080;">041C2A88</span>
<span class="m" style="left:532.60px;top:365.00px;font-size:12px;line-height:12px;letter-spacing:-0.671px;color:#007800;">00000000</span>
<span class="m" style="left:467.60px;top:380.00px;font-size:12px;line-height:12px;letter-spacing:-0.671px;color:#808080;">041C2A8C</span>
<span class="m" style="left:532.60px;top:380.00px;font-size:12px;line-height:12px;letter-spacing:-0.671px;color:#007800;">00000000</span>
<span class="m" style="left:469.50px;top:402.62px;font-size:9.57px;line-height:9.57px;letter-spacing:-0.003px;color:#2e2e2e;">UNKNOWN</span>
<span class="m" style="left:515.40px;top:402.62px;font-size:9.57px;line-height:9.57px;letter-spacing:-0.003px;color:#2e2e2e;">041C2A7C: STACK:041C2A7C</span>
<span class="m" style="left:659.00px;top:402.62px;font-size:9.57px;line-height:9.57px;letter-spacing:-0.003px;color:#2e2e2e;">(Synchronized with ESP)</span>
<div style="left:511px;top:400px;width:1px;height:14px;background:#d4d4d4;"></div>
<div style="left:655px;top:400px;width:1px;height:14px;background:#d4d4d4;"></div>
<div style="left:793px;top:400px;width:1px;height:14px;background:#d4d4d4;"></div>
<div style="left:914px;top:319px;width:15px;height:96px;background:#f0f0f0;"></div>
<svg style="left:917.0px;top:324px" width="9" height="7" viewBox="0 0 9 7"><path d="M0.7 5.2 L4.5 1.4 L8.3 5.2" stroke="#505050" stroke-width="1.4" fill="none"/></svg>
<svg style="left:917.0px;top:403.5px" width="9" height="7" viewBox="0 0 9 7"><path d="M0.7 1.2 L4.5 5 L8.3 1.2" stroke="#505050" stroke-width="1.4" fill="none"/></svg>
<div style="left:915px;top:383px;width:13px;height:15px;background:#cdcdcd;"></div>
<!-- output -->
<div style="left:2px;top:417px;width:928px;height:19px;background:#fff;border:1px solid #b8b8b8;border-bottom-color:#d8d8d8;"></div>
<span class="t" style="left:20.90px;top:421.55px;font-size:10.5px;color:#000;transform:scaleX(0.9057);transform-origin:0 0;">Output window</span>
<div style="left:880px;top:422.5px;width:7px;height:7px;border:1px solid #000;border-top-width:1.6px;"></div>
<svg style="left:898px;top:422.5px" width="7" height="7" viewBox="0 0 7 7"><path d="M2.5 2.5 V0.8 H6.2 V4 H4.6" stroke="#000" stroke-width="1.1" fill="none"/><path d="M2.3 0.9 H6.4" stroke="#000" stroke-width="1.6"/><rect x="0.6" y="3.2" width="4" height="3.2" fill="none" stroke="#000" stroke-width="1.1"/><path d="M0.4 3.1 H4.8" stroke="#000" stroke-width="1.5"/></svg>
<svg style="left:916px;top:422.3px" width="7" height="7" viewBox="0 0 7 7"><path d="M0.7 0.9 L5.9 6.1 M5.9 0.9 L0.7 6.1" stroke="#000" stroke-width="1.3" fill="none"/></svg>
<svg style="left:5px;top:420.9px" width="13" height="13" viewBox="0 0 13 13"><rect x="0.6" y="0.6" width="9.8" height="11.2" fill="#fff" stroke="#5a6a8a" stroke-width="1"/><rect x="0.6" y="0.6" width="9.8" height="1.8" fill="#2a68d8"/><path d="M2.4 4.4 H8.6 M2.4 6.4 H8.6 M2.4 8.4 H8.6 M2.4 10.2 H8.6" stroke="#444" stroke-width="0.9"/></svg>
<div style="left:2px;top:437px;width:928px;height:18px;background:#fff;border:1px solid #828790;border-left:none;"></div>
<span class="m" style="left:5.20px;top:442.00px;font-size:12px;line-height:12px;letter-spacing:-0.661px;color:#000;">Python&gt;open('dumped.bin', 'wb').write(GetManyBytes(here(), 90112))</span>
<div style="left:914px;top:438px;width:15px;height:16px;background:#f0f0f0;"></div>
<svg style="left:917px;top:440px" width="9" height="13" viewBox="0 0 9 13"><path d="M1.5 4.6 L4.5 1.6 L7.5 4.6 M1.5 8.2 L4.5 11.2 L7.5 8.2" stroke="#404040" stroke-width="1.3" fill="none"/></svg>
<div style="left:3px;top:456.5px;width:44.5px;height:17px;background:#e1e1e1;border:1px solid #adadad;"></div>
<span class="t" style="left:10.90px;top:459.65px;font-size:10.5px;color:#000;transform:scaleX(0.8902);transform-origin:0 0;">Python</span>
<div style="left:51px;top:455px;width:878.5px;height:20px;background:#fff;border:1px solid #0078d7;"></div>
<div style="left:53px;top:458.5px;width:1px;height:13px;background:#000;"></div>
<span class="t" style="left:2.60px;top:479.05px;font-size:10.5px;color:#000;transform:scaleX(0.9047);transform-origin:0 0;">AU:  idle</span>
<span class="t" style="left:57.60px;top:479.05px;font-size:10.5px;color:#000;transform:scaleX(0.8978);transform-origin:0 0;">Down</span>
<span class="t" style="left:112.60px;top:479.05px;font-size:10.5px;color:#000;transform:scaleX(0.8550);transform-origin:0 0;">Disk: 72GB</span>
<div style="left:54px;top:478px;width:1px;height:12px;background:#d7d7d7;"></div>
<div style="left:110px;top:478px;width:1px;height:12px;background:#d7d7d7;"></div>
<div style="left:165px;top:478px;width:1px;height:12px;background:#d7d7d7;"></div>
<svg style="left:917px;top:479px" width="12" height="12" viewBox="0 0 12 12"><g fill="#bfbfbf"><rect x="9" y="9" width="2" height="2"/><rect x="6" y="9" width="2" height="2"/><rect x="3" y="9" width="2" height="2"/><rect x="9" y="6" width="2" height="2"/><rect x="6" y="6" width="2" height="2"/><rect x="9" y="3" width="2" height="2"/></g></svg>
</body></html>
